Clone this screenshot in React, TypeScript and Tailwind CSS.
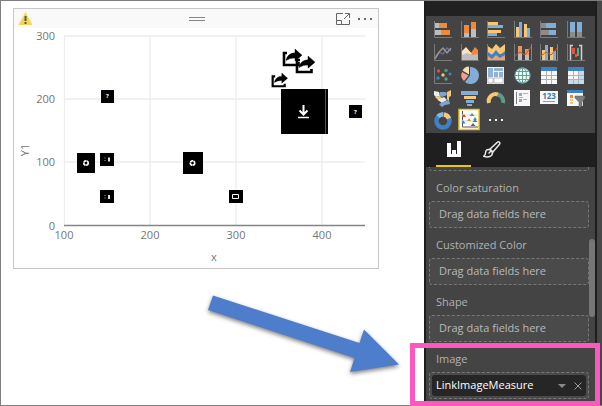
import type { ReactNode } from "react";

const ORANGE = "#ee8a3a";
const SAND = "#f4c877";
const SKY = "#82add9";
const BLUE = "#4080c4";
const SILVER = "#bdbdbd";

function Axis({ color = "#7b7b7b" }: { color?: string }) {
  return <path d="M0.5 1V17.5H18" fill="none" stroke={color} />;
}

const visuals: { name: string; art: ReactNode }[] = [
  {
    name: "Stacked bar chart",
    art: (
      <>
        <Axis />
        <path d="M1 3h4v5H1zM1 10h6v5H1z" fill={SILVER} />
        <path d="M5 3h8v5H5zM7 10h9v5H7z" fill={ORANGE} />
      </>
    ),
  },
  {
    name: "Stacked column chart",
    art: (
      <>
        <Axis />
        <path d="M3 13h5v4H3zM10 9h5v8h-5z" fill={SILVER} />
        <path d="M3 5h5v8H3zM10 2h5v7h-5z" fill={ORANGE} />
      </>
    ),
  },
  {
    name: "Clustered bar chart",
    art: (
      <>
        <Axis />
        <path d="M1 2h10v3H1zM1 10h13v3H1z" fill={SAND} />
        <path d="M1 5h15v3H1zM1 13h9v3H1z" fill={SKY} />
      </>
    ),
  },
  {
    name: "Clustered column chart",
    art: (
      <>
        <Axis />
        <path d="M2 7h3v10H2zM10 4h3v13h-3z" fill={SAND} />
        <path d="M5 2h3v15H5zM13 8h3v9h-3z" fill={SKY} />
      </>
    ),
  },
  {
    name: "100% stacked bar chart",
    art: (
      <>
        <Axis />
        <path d="M1 3h5v5H1zM1 10h8v5H1z" fill="#8c8c8c" />
        <path d="M6 3h10v5H6zM9 10h7v5H9z" fill={SKY} />
      </>
    ),
  },
  {
    name: "100% stacked column chart",
    art: (
      <>
        <Axis />
        <path d="M3 12h5v5H3zM10 12h5v5h-5z" fill="#8c8c8c" />
        <path d="M3 2h5v10H3zM10 2h5v10h-5z" fill={SKY} />
      </>
    ),
  },
  {
    name: "Line chart",
    art: (
      <>
        <Axis />
        <path d="M1 14 5 9l4 2 4-6 4 3" fill="none" stroke="#4a7db5" strokeWidth="1.3" />
        <path d="M1 16 6 8l3-3 4 5 4-5" fill="none" stroke="#b98f84" strokeWidth="1.3" />
      </>
    ),
  },
  {
    name: "Area chart",
    art: (
      <>
        <path d="M1 10 5 5l5 5 4-6 3 3v10H1z" fill={ORANGE} />
        <path d="M1 8 5 4l6 7-5 3-5-2z" fill="#fbe3bf" />
        <path d="M1 12l5-2 6 2 5-1v6H1z" fill={SILVER} />
        <Axis />
      </>
    ),
  },
  {
    name: "Stacked area chart",
    art: (
      <>
        <path d="M1 3l4 3 4-5 4 4 5-4v10L1 12z" fill={SAND} />
        <path d="M1 9l4 3 4-5 4 5 5-4v8H1z" fill={BLUE} />
        <path d="M1 13l4 3 4-4 4 3 5-3v6H1z" fill="#eba173" />
        <Axis />
      </>
    ),
  },
  {
    name: "Line and stacked column chart",
    art: (
      <>
        <Axis />
        <path d="M4 10h4v7H4zM11 12h4v5h-4z" fill={SILVER} />
        <path d="M4 3h4v8H4zM11 6h4v6h-4z" fill="#e89563" />
        <path d="M1 13l5-4 5 3 6-8" fill="none" stroke="#c4573b" />
        <path d="M17.5 1v17" stroke="#c87236" />
      </>
    ),
  },
  {
    name: "Line and clustered column chart",
    art: (
      <>
        <Axis />
        <path d="M2 7h3v10H2zM10 4h3v13h-3z" fill={SAND} />
        <path d="M5 2h3v15H5zM13 8h3v9h-3z" fill={SKY} />
        <path d="M1 13l5-4 5 3 6-7" fill="none" stroke="#c4573b" />
        <path d="M17.5 1v17" stroke="#c87236" />
      </>
    ),
  },
  {
    name: "Waterfall chart",
    art: (
      <>
        <Axis />
        <path d="M3.500 17V2.500H6" fill="none" stroke="#d2d2d2" strokeWidth="1.500" />
        <path d="M5 5h3v6H5zM8 11h2v3H8z" fill="#e4553d" />
        <path d="M10 5h2v8h-2z" fill="#58a889" />
        <path d="M12 2.500h2.500V17" fill="none" stroke="#d2d2d2" strokeWidth="1.500" />
      </>
    ),
  },
  {
    name: "Scatter chart",
    art: (
      <>
        <Axis />
        <circle cx="4.500" cy="5" r="1.700" fill="#d9543d" />
        <circle cx="12" cy="4.500" r="1.700" fill="#4f9a80" />
        <circle cx="9" cy="9" r="1.700" fill={SAND} />
        <circle cx="16" cy="8" r="1.500" fill={BLUE} />
        <circle cx="4" cy="12" r="1.700" fill={BLUE} />
        <circle cx="12" cy="13" r="1.700" fill="#56a08a" />
      </>
    ),
  },
  {
    name: "Pie chart",
    art: (
      <>
        <path d="M9 1a8.500 8.500 0 1 1-5 15L9 9.500z" fill={SKY} />
        <path d="M8 8.500V0.500A8 8 0 0 0 1.500 4.500z" fill="#f8dfae" />
        <path d="M7.500 9.500 1 6a8 8 0 0 0 2 9z" fill="#f2a091" />
      </>
    ),
  },
  {
    name: "Treemap",
    art: (
      <>
        <path d="M0 1h17v17H0z" fill="#f4f4f4" />
        <path d="M1 2h5v9H1zM7 2h9v3H7zM7 6h4v5H7zM12 6h4v5h-4z" fill="#8fb1d3" />
        <path d="M1 12h5v5H1zM7 12h9v5H7z" fill="#fff" stroke="#999" strokeWidth="0.600" />
      </>
    ),
  },
  {
    name: "Map",
    art: (
      <g fill="none" stroke="#4c9bb0">
        <circle cx="8.500" cy="9.500" r="7.700" fill="#f2f8f8" />
        <ellipse cx="8.500" cy="9.500" rx="4" ry="7.700" stroke="#5aa58c" />
        <path d="M8.500 2v15M1 9.500h15M2.500 5.500h12M2.500 13.500h12" stroke="#5aa58c" />
      </g>
    ),
  },
  {
    name: "Table",
    art: (
      <>
        <path d="M1 1h16v17H1z" fill="#f8f8f8" />
        <path d="M1 1h16v4H1z" fill={BLUE} />
        <path d="M6.500 5v13M11.500 5v13M1 9.500h16M1 13.500h16" stroke="#b0b0b0" />
      </>
    ),
  },
  {
    name: "Matrix",
    art: (
      <>
        <path d="M1 1h16v17H1z" fill="#f8f8f8" />
        <path d="M11 5h6v13h-6zM1 14h16v4H1z" fill="#c7daec" />
        <path d="M1 1h16v4H1z" fill={BLUE} />
        <path d="M6.500 5v13M11.500 5v13M1 9.500h16M1 13.500h16" stroke="#a9b4c0" />
      </>
    ),
  },
  {
    name: "Filled map",
    art: (
      <>
        <path d="M0 2l5 1 1 4-4 1-2-2z" fill="#eee" />
        <path d="M6 3h6l1 3-5 2-3-2z" fill="#79a5cf" />
        <path d="M13 3l4-2v6l-2 1v5l-2-3z" fill={SAND} />
        <path d="M1 8l5-1 3 3-4 2z" fill={SAND} />
        <path d="M4 11l6-3 3 3-5 3z" fill="#e8e8e8" />
        <path d="M9 13l6-2 1 4-5 1-3 2-3-3z" fill="#79a5cf" />
      </>
    ),
  },
  {
    name: "Funnel chart",
    art: (
      <>
        <path d="M0 2h17v4H0zM5 11h8v3H5z" fill={SKY} />
        <path d="M3 7h12v3H3z" fill={SAND} />
        <path d="M6 15h5v2H6z" fill={SKY} />
      </>
    ),
  },
  {
    name: "Gauge",
    art: (
      <g fill="none" strokeWidth="4">
        <path d="M2 14a7 7 0 0 1 9-8.500" stroke={SAND} />
        <path d="M11 5.500A7 7 0 0 1 16 14" stroke="#5f9c87" />
      </g>
    ),
  },
  {
    name: "Multi-row card",
    art: (
      <>
        <path d="M0 1h16v16H0z" fill="#f7f7f7" />
        <path d="M2.500 3v12" stroke="#777" />
        <path d="M5 4h3v3H5zM5 10h3v3H5z" fill={SKY} />
        <path d="M9 4.500h5M9 10.500h4M5 8.500h4" stroke="#9bb5ce" />
      </>
    ),
  },
  {
    name: "Card",
    art: (
      <>
        <path d="M0 2h18v13H0z" fill="#f7f7f7" />
        <text x="9" y="10" textAnchor="middle" fontSize="8" fontWeight="700" fill="#3d78b5">
          123
        </text>
        <path d="M3 12.500h12" stroke="#999" />
      </>
    ),
  },
  {
    name: "Slicer",
    art: (
      <>
        <path d="M0 1h16v16H0z" fill="#f7f7f7" />
        <path d="M0 1h16v3H0z" fill={BLUE} />
        <path d="M3 6h3v3H3z" fill={ORANGE} />
        <path d="M3 10h3v2H3zM3 13h3v2H3z" fill={SAND} />
        <path d="M8 7h10v2l-3 4v4l-3 2v-6L8 9z" fill="#7d7d7d" stroke="#5a5a5a" strokeWidth="0.500" />
      </>
    ),
  },
  {
    name: "Donut chart",
    art: (
      <g fill="none" strokeWidth="4.500">
        <circle cx="9" cy="9" r="6.500" stroke={BLUE} />
        <path d="M4 4.500A6.500 6.500 0 0 1 9 2.500" stroke="#8db7df" />
        <path d="M10 2.500a6.500 6.500 0 0 1 5 4" stroke={SAND} />
      </g>
    ),
  },
  {
    name: "Enlighten scatter",
    art: (
      <g transform="translate(-2 -1)">
        <path d="M0 -1.500h20v20H0z" fill="#fff" stroke="#ecc81e" strokeWidth="1.500" />
        <path d="M3.500 0v16H19" fill="none" stroke="#555" />
        <path d="M2 4h17M2 10h17" stroke="#ddd" />
        <path d="M5 3l2 3H3z" fill="#d9472f" />
        <path d="M13 2l2.500 3h-5zM16 6l2 3h-4z" fill="#4d9b7c" />
        <path d="M4.500 9.500l2 3h-4zM16 8l2.500 3h-5z" fill={BLUE} />
        <path d="M10 7l2 3H8z" fill={ORANGE} />
        <path d="M14 12l2.500 3h-5z" fill="#666" />
      </g>
    ),
  },
  {
    name: "More visuals",
    art: <path d="M2 7h2v2H2zM8 7h2v2H8zM14 7h2v2h-2z" fill="#efefef" />,
  },
];

function ShareGlyph({ x, y, size = 1 }: { x: number; y: number; size?: number }) {
  return (
    <g transform={`translate(${x} ${y}) scale(${size})`}>
      <path d="M5 4H2v12h14.500V13" fill="none" stroke="#000" strokeWidth="2.600" />
      <path
        d="M4 11.500C5 6.500 8.500 4 13 3.800V0l7 6.200-7 6V9c-4 0-6 .8-9 2.500z"
        fill="#000"
        stroke="#000"
        strokeWidth="0.400"
      />
    </g>
  );
}

function Marker({ x, y, w, h, children }: { x: number; y: number; w: number; h: number; children?: ReactNode }) {
  return (
    <g>
      <rect x={x} y={y} width={w} height={h} fill="#000" />
      {children}
    </g>
  );
}

function ScatterPlot() {
  return (
    <svg
      viewBox="14 28 364 240"
      className="block w-full text-[11px]"
      role="img"
      aria-label="Scatter chart of Y1 by x"
    >
      <path d="M64 36h301M64 99h301M64 162h301M64.500 36v189M150 36v189M236 36v189M322 36v189" stroke="#ededed" strokeWidth="1.300" />
      <path d="M64 225.500h301" stroke="#858585" strokeWidth="1.500" />
      <g fill="#767676">
        <g textAnchor="end">
          <text x="55" y="40">300</text>
          <text x="55" y="103">200</text>
          <text x="55" y="166">100</text>
          <text x="55" y="230">0</text>
        </g>
        <g textAnchor="middle">
          <text x="64" y="239">100</text>
          <text x="150" y="239">200</text>
          <text x="236" y="239">300</text>
          <text x="322" y="239">400</text>
          <text x="214" y="261">x</text>
          <text transform="translate(29 150) rotate(-90)">Y1</text>
        </g>
      </g>

      <g fontSize="6" fontWeight="700" fill="#fff" textAnchor="middle">
        <Marker x={101} y={90} w={13} h={13}>
          <text x="107.500" y="98">?</text>
        </Marker>
        <Marker x={349} y={105} w={13} h={13}>
          <text x="355.500" y="114">?</text>
        </Marker>
      </g>
      <Marker x={77} y={153} w={18} h={20}>
        <circle cx="86" cy="163" r="2.200" fill="none" stroke="#fff" strokeWidth="1.700" strokeDasharray="3 .4" />
      </Marker>
      <Marker x={183} y={152} w={20} h={22}>
        <circle cx="192.500" cy="163" r="2.200" fill="none" stroke="#fff" strokeWidth="1.700" strokeDasharray="3 .4" />
      </Marker>
      <Marker x={100} y={153} w={14} h={13}>
        <path d="M108 157.500h2v4h-2z" fill="#ddd" />
        <path d="M105 157.500v1M105 160v1" stroke="#aaa" />
      </Marker>
      <Marker x={100} y={190} w={14} h={13}>
        <path d="M108 195h2v4h-2z" fill="#ddd" />
        <path d="M105 195v1M105 197.500v1" stroke="#aaa" />
      </Marker>
      <Marker x={229} y={190} w={14} h={13}>
        <path d="M232.500 194.500h6v4h-6z" fill="none" stroke="#fff" />
      </Marker>
      <ShareGlyph x={282} y={49} />
      <ShareGlyph x={295} y={56} />
      <ShareGlyph x={271} y={73} size={0.83} />
      <Marker x={281} y={89} w={47} h={45}>
        <path d="M325.500 89v45" stroke="#777" strokeWidth="0.700" />
        <path d="M303.500 105v9M299.500 110.500l4 4 4-4" fill="none" stroke="#fff" strokeWidth="2" />
        <path d="M298 117.500h11" stroke="#fff" strokeWidth="1.500" />
      </Marker>
    </svg>
  );
}

function ChartCard() {
  return (
    <section className="mt-[7px] mr-[45px] ml-3 border border-[#c8c8c8] bg-white">
      <header className="flex h-[19px] items-center justify-between bg-[#f9f9f9] px-1">
        <svg width="15" height="15" viewBox="0 0 15 15" role="img" aria-label="Warning">
          <path d="M7.500 1 14.500 14H0.500z" fill="#f6d654" />
          <path d="M6.500 5h2v5h-2zM6.500 11h2v2h-2z" fill="#5d5a4a" />
        </svg>
        <svg width="16" height="6" viewBox="0 0 16 6" className="ml-6" aria-hidden="true">
          <path d="M0 1.500h16M0 4.500h16" stroke="#858585" />
        </svg>
        <div className="flex items-center gap-2 pr-[2px]">
          <button type="button" aria-label="Focus mode" className="block">
            <svg width="14" height="12" viewBox="0 0 14 12" fill="none" stroke="#666">
              <path d="M7 .5H.5v11h13V7M.5 7.500h5v4M8 6l5-5M9 .5h4.500V5" />
            </svg>
          </button>
          <button type="button" aria-label="More options" className="block">
            <svg width="14" height="4" viewBox="0 0 14 4" fill="#666">
              <path d="M0 1h2v2H0zM6 1h2v2H6zM12 1h2v2h-2z" />
            </svg>
          </button>
        </div>
      </header>
      <ScatterPlot />
    </section>
  );
}

function PointerArrow() {
  return (
    <svg width="206" height="96" viewBox="204 291 206 96" className="mt-[22px] mr-[14px] self-end" aria-hidden="true">
      <path
        d="M213 295.500 359.500 343 364 329.500 399 364.500 350 372 354.500 358 208 310z"
        fill="#4e7dcb"
        className="drop-shadow-[0_2px_2px_rgba(0,0,0,0.5)]"
      />
    </svg>
  );
}

function FieldWell({ label, children }: { label: string; children?: ReactNode }) {
  return (
    <div role="group" aria-label={label}>
      <h3 className="flex h-[30px] items-center pt-1 pl-[7px] text-[#b1b1b1]">{label}</h3>
      <div className="flex h-[27px] items-center rounded-[3px] border border-dashed border-[#777] bg-[#4a4a4a]">
        {children ?? <span className="pl-[9px] text-[#b9b9b9]">Drag data fields here</span>}
      </div>
    </div>
  );
}

function VisualPane() {
  return (
    <aside className="flex w-[173px] shrink-0 flex-col border-x-2 border-[#1d1d1d] bg-[#444] text-[11px]">
      <div className="h-[15px] bg-[#212121]" />
      <div className="grid auto-rows-[18px] grid-cols-6 gap-y-[5px] pt-1 pr-[2px] pb-[3px] pl-2">
        {visuals.map((v) => (
          <button key={v.name} type="button" aria-label={v.name} className="block size-[18px]">
            <svg width="18" height="18" viewBox="0 0 18 18" className="overflow-visible">
              {v.art}
            </svg>
          </button>
        ))}
      </div>
      <div role="tablist" className="flex h-[34px] bg-[#1f1f1f] pl-[10px]">
        <button
          type="button"
          role="tab"
          aria-selected="true"
          aria-label="Fields"
          className="flex w-[35px] items-center justify-center border-b-2 border-[#ecc21c]"
        >
          <svg width="14" height="16" viewBox="0 0 14 16" fill="#fff">
            <path d="M0 2h4v12H0zM5 9h4v5H5zM10 0h4v14h-4zM0 13h14v3H0z" />
          </svg>
        </button>
        <button
          type="button"
          role="tab"
          aria-selected="false"
          aria-label="Format"
          className="flex w-[41px] items-center justify-center border-b-2 border-transparent"
        >
          <svg width="18" height="17" viewBox="0 0 18 17" fill="none" stroke="#e6e6e6" strokeWidth="1.500">
            <path d="M7 8 14.500 1.200c1.500-1 3 .5 2 2L10 11z" />
            <path d="M6.500 8.500c-3-.5-4 1.500-4 3.500 0 1.500-.5 2.500-1.700 3.200 4 1.500 8.700.5 8.700-3.700z" />
            <path d="M5.500 12.500 8 10" />
          </svg>
        </button>
      </div>
      <div className="flex flex-1">
        <div className="flex-1 pl-[3px]">
          <div className="h-1 rounded-b-[3px] border-x border-b border-dashed border-[#777]" />
          <FieldWell label="Color saturation" />
          <FieldWell label="Customized Color" />
          <FieldWell label="Shape" />
          <FieldWell label="Image">
            <div className="mx-[2px] flex h-[21px] flex-1 items-center rounded-[3px] bg-[#262626] pl-1 text-white">
              <span className="flex-1">LinkImageMeasure</span>
              <button type="button" aria-label="Field options" className="mr-2 block">
                <svg width="8" height="4" viewBox="0 0 8 4" fill="#8a8a8a">
                  <path d="M0 0h8L4 4z" />
                </svg>
              </button>
              <button type="button" aria-label="Remove field" className="mr-1 block">
                <svg width="8" height="8" viewBox="0 0 8 8" stroke="#999">
                  <path d="M.5.5l7 7M7.500.5l-7 7" />
                </svg>
              </button>
            </div>
          </FieldWell>
        </div>
        <div className="mt-[72px] h-[78px] w-[6px] rounded-full bg-[#767676]" />
      </div>
    </aside>
  );
}

export default function App() {
  return (
    <div className="relative flex min-h-screen border-y border-l border-[#7f7f7f] bg-white font-['Open_Sans','Noto_Sans',sans-serif]">
      <main className="flex min-w-0 flex-1 flex-col">
        <ChartCard />
        <PointerArrow />
      </main>
      <VisualPane />
      <div className="w-[5px] shrink-0 bg-[#484848]" />
      <div className="pointer-events-none absolute right-[2px] -bottom-px h-[63px] w-[190px] border-[5px] border-[#ff57c1]" />
    </div>
  );
}
